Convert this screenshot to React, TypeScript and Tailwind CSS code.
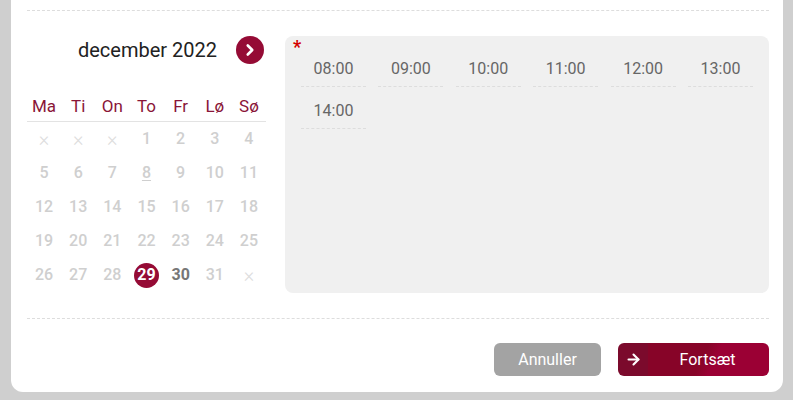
import { ChevronRight, ArrowRight } from "lucide-react";

const weekdays = ["Ma", "Ti", "On", "To", "Fr", "Lø", "Sø"];

// null = not selectable (shown as ×)
const days: (number | null)[] = [
  null, null, null, 1, 2, 3, 4,
  5, 6, 7, 8, 9, 10, 11,
  12, 13, 14, 15, 16, 17, 18,
  19, 20, 21, 22, 23, 24, 25,
  26, 27, 28, 29, 30, 31, null,
];

const times = ["08:00", "09:00", "10:00", "11:00", "12:00", "13:00", "14:00"];

function Day({ d }: { d: number | null }) {
  if (d === null) {
    return <div className="flex h-[34px] items-center justify-center text-[20px] font-light text-[#dddddd]">×</div>;
  }
  if (d === 29) {
    return (
      <div className="flex h-[34px] items-center justify-center">
        <span className="flex h-[25px] w-[25px] items-center justify-center rounded-full bg-[#950b35] text-[16px] font-bold text-white">
          29
        </span>
      </div>
    );
  }
  if (d === 30) {
    return <div className="flex h-[34px] items-center justify-center text-[16px] font-bold text-[#777777]">30</div>;
  }
  return (
    <div
      className={
        "flex h-[34px] items-center justify-center text-[16px] font-medium text-[#cfcfcf]" +
        (d === 8 ? " underline underline-offset-2" : "")
      }
    >
      {d}
    </div>
  );
}

export default function App() {
  return (
    <div className="h-[400px] w-[793px] bg-[#cfcfcf] pl-[11px] font-['Roboto',sans-serif]">
      <div className="h-[392px] w-[772px] rounded-b-[12px] bg-white pl-[16px] pr-[14px] pt-[10px]">
        <div className="flex gap-[19px] border-t border-dashed border-[#dddddd] pt-[25px]">
          <div className="w-[239px]">
            <div className="flex h-[28px] items-center justify-end gap-[19px] pr-[2px]">
              <span className="text-[20px] text-[#222222]">december 2022</span>
              <button className="flex h-[28px] w-[28px] items-center justify-center rounded-full bg-[#950b35] text-white">
                <ChevronRight size={18} strokeWidth={3.5} />
              </button>
            </div>
            <div className="mt-[31px] grid grid-cols-7 border-b border-[#e3e3e3] pb-[2px]">
              {weekdays.map((w) => (
                <div key={w} className="flex h-[24px] items-center justify-center text-[17px] text-[#8a1538]">
                  {w}
                </div>
              ))}
            </div>
            <div className="grid grid-cols-7">
              {days.map((d, i) => (
                <Day key={i} d={d} />
              ))}
            </div>
          </div>
          <div className="relative h-[257px] flex-1 rounded-[8px] bg-[#f0f0f0] pl-[16px] pr-[16px] pt-[15px]">
            <span className="absolute left-[8px] top-[2px] text-[18px] font-bold leading-none text-[#d40000]">*</span>
            <div className="grid grid-cols-[repeat(6,65px)] gap-x-[12.4px] gap-y-[6px]">
              {times.map((t) => (
                <div
                  key={t}
                  className="flex h-[36px] items-center justify-center border-b border-dashed border-[#dddddd] pt-[1px] text-[16px] text-[#666666]"
                >
                  {t}
                </div>
              ))}
            </div>
          </div>
        </div>
        <div className="mt-[25px] flex justify-end gap-[17px] border-t border-dashed border-[#dddddd] pt-[24px]">
          <button className="h-[33px] w-[107px] rounded-[6px] bg-[#a3a3a3] text-[16px] text-white">
            Annuller
          </button>
          <button className="flex h-[33px] w-[151px] overflow-hidden rounded-[6px] text-[16px] text-white">
            <span className="flex h-full w-[30px] items-center justify-center bg-[#7b0a2c]">
              <ArrowRight size={17} strokeWidth={3} />
            </span>
            <span className="flex h-full flex-1 items-center justify-center bg-[linear-gradient(115deg,#870428_0%,#870428_45%,#9b0034_55%,#9b0034_100%)] pr-[2px]">
              Fortsæt
            </span>
          </button>
        </div>
      </div>
    </div>
  );
}
